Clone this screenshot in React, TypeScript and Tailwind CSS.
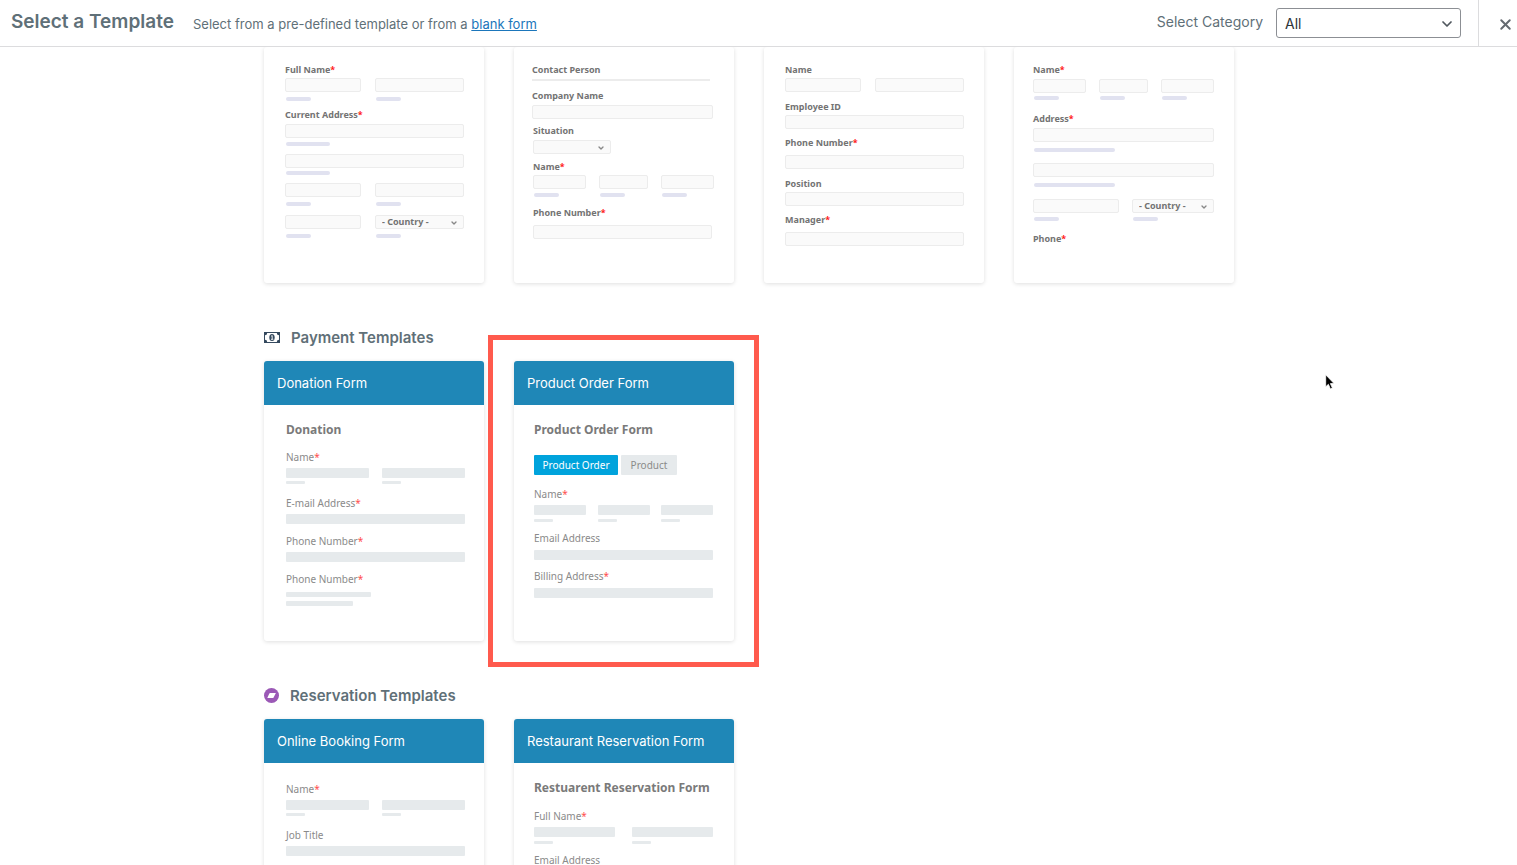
import { ReactNode } from "react";
import { ChevronDown, X } from "lucide-react";

type Cls = { className?: string };

function Caption({ children, required, htmlFor, className = "" }: Cls & { children: ReactNode; required?: boolean; htmlFor?: string }) {
  return (
    <label htmlFor={htmlFor} className={`block font-['Noto_Sans',sans-serif] text-[9px] leading-[12px] font-bold text-[#737373] ${className}`}>
      {children}
      {required && <span className="text-[#ff1a1a]">*</span>}
    </label>
  );
}

function Box({ id, label, className = "" }: Cls & { id?: string; label?: string }) {
  return (
    <input
      id={id}
      aria-label={label}
      readOnly
      className={`block h-[14px] w-full min-w-0 rounded-[2px] border border-[#ececec] bg-[#fafafa] outline-none ${className}`}
    />
  );
}

function Drop({ id, label, option, className = "" }: Cls & { id?: string; label?: string; option: string }) {
  return (
    <div className={`relative h-[14px] ${className}`}>
      <select
        id={id}
        aria-label={label}
        className="block h-full w-full appearance-none rounded-[2px] border border-[#ececec] bg-[#fafafa] px-[6px] font-['Noto_Sans',sans-serif] text-[9px] leading-[12px] font-bold text-[#737373] outline-none"
      >
        <option>{option}</option>
      </select>
      <ChevronDown className="pointer-events-none absolute top-[4px] right-[6px] size-[8px] text-[#888]" strokeWidth={4} />
    </div>
  );
}

function Hint({ className = "w-[25px]" }: Cls) {
  return <div className={`ml-px h-[4px] rounded-full bg-[#e1e2f0] ${className}`} />;
}

function Title({ children }: { children: ReactNode }) {
  return <h4 className="font-['Noto_Sans',sans-serif] text-[12px] leading-[16px] font-bold whitespace-nowrap text-[#7a7a7a]">{children}</h4>;
}

function Note({ children, required, htmlFor, className = "" }: Cls & { children: ReactNode; required?: boolean; htmlFor?: string }) {
  return (
    <label htmlFor={htmlFor} className={`block font-['Noto_Sans',sans-serif] text-[10px] leading-[12px] text-[#8a8a8a] ${className}`}>
      {children}
      {required && <span className="text-[#ff4d4d]">*</span>}
    </label>
  );
}

function Bar({ id, label, className = "" }: Cls & { id?: string; label?: string }) {
  return <input id={id} aria-label={label} readOnly className={`block h-[10px] w-full min-w-0 rounded-[1px] bg-[#e6eaec] outline-none ${className}`} />;
}

function Line({ className = "w-[19px]" }: Cls) {
  return <div className={`h-[3px] rounded-[1px] bg-[#e6eaec] ${className}`} />;
}

function Card({ title, children, className = "pr-[20px]" }: Cls & { title?: string; children: ReactNode }) {
  return (
    <article className="w-[220px] rounded-[3px] bg-white shadow-[0_1px_4px_rgba(0,0,0,0.13)]">
      {title && (
        <h3 className="flex h-[44px] items-center rounded-t-[3px] bg-[#1f87b7] px-[13px] pt-[2px] text-[13px] font-normal text-white">{title}</h3>
      )}
      <div className={`h-[236px] ${className}`}>{children}</div>
    </article>
  );
}

function Heading({ icon, children }: { icon: ReactNode; children: ReactNode }) {
  return (
    <h2 className="mt-[43px] mb-[11px] flex items-center gap-[11px] text-[15px] leading-[24px] font-semibold text-[#5f7078]">
      {icon}
      {children}
    </h2>
  );
}

function AddressCard() {
  const pair = "grid grid-cols-[76px_89px] justify-between";
  return (
    <Card className="pt-[17px] pr-[20px] pl-[21px]">
      <Caption required htmlFor="a-first">Full Name</Caption>
      <div className={`mt-[2px] ${pair}`}><Box id="a-first" /><Box label="Last name" /></div>
      <div className={`mt-[5px] ${pair}`}><Hint /><Hint /></div>
      <Caption required htmlFor="a-street" className="mt-[8px]">Current Address</Caption>
      <Box id="a-street" className="mt-[3px]" />
      <div className="mt-[4px]"><Hint className="w-[44px]" /></div>
      <Box label="Street address line 2" className="mt-[8px]" />
      <div className="mt-[3px]"><Hint className="w-[44px]" /></div>
      <div className={`mt-[8px] ${pair}`}><Box label="City" /><Box label="State" /></div>
      <div className={`mt-[5px] ${pair}`}><Hint /><Hint /></div>
      <div className={`mt-[9px] ${pair}`}><Box label="Postal code" /><Drop label="Country" option="- Country -" /></div>
      <div className={`mt-[5px] ${pair}`}><Hint /><Hint /></div>
    </Card>
  );
}

function ContactCard() {
  const trio = "grid grid-cols-[53px_49px_53px] justify-between";
  return (
    <Card className="pt-[17px] pr-[21px] pl-[18px]">
      <h4 className="font-['Noto_Sans',sans-serif] text-[9px] leading-[12px] font-bold text-[#737373]">Contact Person</h4>
      <div className="mt-[3px] mr-[3px] h-[2px] bg-[#ececec]" />
      <Caption htmlFor="b-company" className="mt-[9px]">Company Name</Caption>
      <Box id="b-company" className="mt-[3px]" />
      <div className="-mr-px pl-px">
        <Caption htmlFor="b-situation" className="mt-[6px]">Situation</Caption>
        <Drop id="b-situation" option="" className="mt-[3px] w-[78px]" />
        <Caption required htmlFor="b-first" className="mt-[7px]">Name</Caption>
        <div className={`mt-[2px] ${trio}`}><Box id="b-first" /><Box label="Middle name" /><Box label="Last name" /></div>
        <div className={`mt-[4px] ${trio}`}><Hint /><Hint /><Hint /></div>
        <Caption required htmlFor="b-phone" className="mt-[10px]">Phone Number</Caption>
        <div className="mt-[6px] pr-[2px]"><Box id="b-phone" /></div>
      </div>
    </Card>
  );
}

function EmployeeCard() {
  return (
    <Card className="pt-[17px] pr-[20px] pl-[21px]">
      <Caption htmlFor="c-first">Name</Caption>
      <div className="mt-[2px] grid grid-cols-[76px_89px] justify-between"><Box id="c-first" /><Box label="Last name" /></div>
      <Caption htmlFor="c-id" className="mt-[9px]">Employee ID</Caption>
      <Box id="c-id" className="mt-[2px]" />
      <Caption required htmlFor="c-phone" className="mt-[8px]">Phone Number</Caption>
      <Box id="c-phone" className="mt-[6px]" />
      <Caption htmlFor="c-position" className="mt-[9px]">Position</Caption>
      <Box id="c-position" className="mt-[2px]" />
      <Caption required htmlFor="c-manager" className="mt-[8px]">Manager</Caption>
      <Box id="c-manager" className="mt-[6px]" />
    </Card>
  );
}

function PersonCard() {
  const trio = "grid grid-cols-[53px_49px_53px] justify-between";
  const pair = "grid grid-cols-[86px_82px] justify-between";
  return (
    <Card className="pt-[17px] pr-[20px] pl-[19px]">
      <Caption required htmlFor="d-first">Name</Caption>
      <div className={`mt-[3px] ${trio}`}><Box id="d-first" /><Box label="Middle name" /><Box label="Last name" /></div>
      <div className={`mt-[3px] ${trio}`}><Hint /><Hint /><Hint /></div>
      <Caption required htmlFor="d-street" className="mt-[13px]">Address</Caption>
      <Box id="d-street" className="mt-[3px]" />
      <div className="mt-[6px]"><Hint className="w-[81px]" /></div>
      <Box label="Street address line 2" className="mt-[11px]" />
      <div className="mt-[6px]"><Hint className="w-[81px]" /></div>
      <div className={`mt-[12px] ${pair}`}><Box label="City" /><Drop label="Country" option="- Country -" /></div>
      <div className={`mt-[4px] ${pair}`}><Hint /><Hint /></div>
      <Caption required className="mt-[12px]">Phone</Caption>
    </Card>
  );
}

function DonationCard() {
  const pair = "grid grid-cols-[83px_83px] justify-between";
  return (
    <Card title="Donation Form" className="pt-[17px] pr-[19px] pl-[22px]">
      <Title>Donation</Title>
      <Note required htmlFor="e-first" className="mt-[13px]">Name</Note>
      <div className={`mt-[5px] ${pair}`}><Bar id="e-first" /><Bar label="Last name" /></div>
      <div className={`mt-[3px] ${pair}`}><Line /><Line /></div>
      <Note required htmlFor="e-mail" className="mt-[13px]">E-mail Address</Note>
      <Bar id="e-mail" className="mt-[5px]" />
      <Note required htmlFor="e-phone" className="mt-[11px]">Phone Number</Note>
      <Bar id="e-phone" className="mt-[5px]" />
      <Note required className="mt-[11px]">Phone Number</Note>
      <div className="mt-[7px] h-[5px] w-[85px] rounded-[1px] bg-[#e6eaec]" />
      <div className="mt-[4px] h-[5px] w-[67px] rounded-[1px] bg-[#e6eaec]" />
    </Card>
  );
}

function ProductCard() {
  const trio = "grid grid-cols-[52px_52px_52px] justify-between";
  const tab = "flex h-[20px] items-center justify-center rounded-[1px] font-['Noto_Sans',sans-serif] text-[10px]";
  return (
    <Card title="Product Order Form" className="pt-[17px] pr-[21px] pl-[20px]">
      <Title>Product Order Form</Title>
      <div className="mt-[17px] flex gap-[3px]">
        <button type="button" className={`w-[84px] bg-[#00a3dc] text-white ${tab}`}>Product Order</button>
        <button type="button" className={`w-[56px] bg-[#e6eaec] text-[#8a8a8a] ${tab}`}>Product</button>
      </div>
      <Note required htmlFor="f-first" className="mt-[13px]">Name</Note>
      <div className={`mt-[5px] ${trio}`}><Bar id="f-first" /><Bar label="Middle name" /><Bar label="Last name" /></div>
      <div className={`mt-[4px] ${trio}`}><Line /><Line /><Line /></div>
      <Note htmlFor="f-mail" className="mt-[10px]">Email Address</Note>
      <Bar id="f-mail" className="mt-[6px]" />
      <Note required htmlFor="f-bill" className="mt-[10px]">Billing Address</Note>
      <Bar id="f-bill" className="mt-[6px]" />
    </Card>
  );
}

function BookingCard() {
  const pair = "grid grid-cols-[83px_83px] justify-between";
  return (
    <Card title="Online Booking Form" className="pt-[20px] pr-[19px] pl-[22px]">
      <Note required htmlFor="g-first">Name</Note>
      <div className={`mt-[5px] ${pair}`}><Bar id="g-first" /><Bar label="Last name" /></div>
      <div className={`mt-[3px] ${pair}`}><Line /><Line /></div>
      <Note htmlFor="g-job" className="mt-[13px]">Job Title</Note>
      <Bar id="g-job" className="mt-[5px]" />
    </Card>
  );
}

function RestaurantCard() {
  const pair = "grid grid-cols-[81px_81px] justify-between";
  return (
    <Card title="Restaurant Reservation Form" className="pt-[17px] pr-[21px] pl-[20px]">
      <Title>Restuarent Reservation Form</Title>
      <Note required htmlFor="h-first" className="mt-[14px]">Full Name</Note>
      <div className={`mt-[5px] ${pair}`}><Bar id="h-first" /><Bar label="Last name" /></div>
      <div className={`mt-[4px] ${pair}`}><Line /><Line /></div>
      <Note htmlFor="h-mail" className="mt-[10px]">Email Address</Note>
      <Bar id="h-mail" className="mt-[6px]" />
    </Card>
  );
}

function MoneyIcon() {
  return (
    <svg viewBox="0 0 16 11" className="mb-[2px] h-[11px] w-[16px]" aria-hidden="true">
      <rect width="16" height="11" fill="#34495e" />
      <path d="M3.200 1h9.600a2.200 2.200 0 0 0 2.200 2.200v4.600a2.200 2.200 0 0 0-2.200 2.200H3.200A2.200 2.200 0 0 0 1 7.800V3.200A2.200 2.200 0 0 0 3.200 1z" fill="#fff" />
      <ellipse cx="8" cy="5.500" rx="2.700" ry="3.600" fill="#34495e" />
      <path d="M7.200 4.200l1-.7v3.700M7 7.300h2.300" fill="none" stroke="#fff" strokeWidth="0.900" />
    </svg>
  );
}

function ReservationIcon() {
  return (
    <svg viewBox="0 0 15 15" className="mb-[2px] size-[15px]" aria-hidden="true">
      <circle cx="7.500" cy="7.500" r="7.500" fill="#9b59b6" />
      <path d="M6.200 5h5.700L9.600 9.400a1.100 1.100 0 0 1-1 .6H3.300l1.900-4.300a1.100 1.100 0 0 1 1-.7z" fill="#fff" />
    </svg>
  );
}

export default function App() {
  return (
    <div className="flex h-screen flex-col overflow-hidden bg-white font-[Inter,sans-serif]">
      <header className="flex h-[47px] shrink-0 items-center border-b border-[#dcdcde] bg-white pl-[11px] text-[#5f7078]">
        <h1 className="pb-[2px] text-[19px] leading-[24px] font-semibold">Select a Template</h1>
        <p className="ml-[19px] pt-[2px] text-[13px] leading-[20px]">
          Select from a pre-defined template or from a{" "}
          <a href="#blank" className="text-[#1b76bb] underline">blank form</a>
        </p>
        <label htmlFor="category" className="ml-auto pb-[2px] text-[14px] leading-[20px]">Select Category</label>
        <div className="relative ml-[13px] h-[30px] w-[185px]">
          <select id="category" className="block h-full w-full appearance-none rounded-[3px] border border-[#8c8f94] bg-white px-[8px] text-[14px] text-[#2c3338]">
            <option>All</option>
          </select>
          <ChevronDown className="pointer-events-none absolute top-[8px] right-[6px] size-[16px] text-[#50575e]" strokeWidth={2.6} />
        </div>
        <button type="button" aria-label="Close" className="ml-[17px] flex h-full w-[39px] items-center justify-end border-l border-[#dcdcde] pt-[2px] pr-[3px] text-[#646970]">
          <X className="size-[17px]" strokeWidth={2.8} />
        </button>
      </header>

      <main className="flex min-h-0 flex-1 justify-center overflow-hidden pr-[19px]">
        <div>
          <section className="flex gap-[30px]">
            <AddressCard />
            <ContactCard />
            <EmployeeCard />
            <PersonCard />
          </section>

          <Heading icon={<MoneyIcon />}>Payment Templates</Heading>
          <section className="flex gap-[30px]">
            <DonationCard />
            <div className="relative">
              <ProductCard />
              <div className="pointer-events-none absolute -top-[26px] -right-[25px] -bottom-[26px] -left-[26px] border-[5px] border-[#ff5a4d]" />
            </div>
          </section>

          <Heading icon={<ReservationIcon />}>Reservation Templates</Heading>
          <section className="flex gap-[30px]">
            <BookingCard />
            <RestaurantCard />
          </section>
        </div>
      </main>

      <svg viewBox="0 0 10 16" className="pointer-events-none absolute top-[374px] left-[1325px] h-[16px] w-[10px]" aria-hidden="true">
        <path d="M.7.800v12l2.700-2.500 2 4.700 2-.9-2-4.500h3.700z" fill="#000" stroke="#fff" strokeWidth="0.800" />
      </svg>
    </div>
  );
}
